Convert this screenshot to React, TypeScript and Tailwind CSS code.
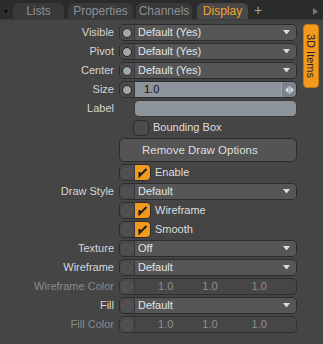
import React from "react";

const font = { fontFamily: '"Liberation Sans", Arial, sans-serif' };

function Dot({ on }: { on?: boolean }) {
  return (
    <div className="w-[15px] shrink-0 flex items-center justify-center border-r border-[#383838] bg-[#4b4b4b]">
      {on ? (
        <div className="w-[10px] h-[10px] rounded-full bg-[#a6a6a6] border border-[#222]" />
      ) : (
        <div className="w-[10px] h-[10px] rounded-full border border-[#5c5c5c] bg-[#4e4e4e]" />
      )}
    </div>
  );
}

function Arrow() {
  return (
    <svg width="7" height="5" viewBox="0 0 7 5" className="mr-[6px]">
      <path d="M0 0 L7 0 L3.5 4.5 Z" fill="#dcdcdc" />
    </svg>
  );
}

function Row({ label, dim, children }: { label?: string; dim?: boolean; children: React.ReactNode }) {
  return (
    <div className="flex h-[17px] mb-[2px]">
      <div
        className={`w-[119px] pr-[5px] text-right leading-[17px] ${dim ? "text-[#8a8a8a]" : "text-[#d6d6d6]"}`}
      >
        {label}
      </div>
      <div className="w-[178px] flex">{children}</div>
    </div>
  );
}

function Select({ value, on }: { value: string; on?: boolean }) {
  return (
    <div className="w-full flex rounded-[5px] border border-[#2c2c2c] overflow-hidden">
      <Dot on={on} />
      <div className="flex-1 flex items-center justify-between bg-[#565656] pl-[3px] text-[#e4e4e4]">
        <span className="leading-[15px]">{value}</span>
        <Arrow />
      </div>
    </div>
  );
}

function Color() {
  return (
    <div className="w-full flex rounded-[5px] border border-[#2f2f2f] overflow-hidden">
      <Dot />
      <div className="flex-1 flex items-center bg-[#464646] text-[#8e8e8e] leading-[15px]">
        <span className="ml-[23px]">1.0</span>
        <span className="ml-[29px]">1.0</span>
        <span className="ml-[34px]">1.0</span>
      </div>
    </div>
  );
}

function Check({ label }: { label: string }) {
  return (
    <div className="flex items-center">
      <div className="flex h-[17px] rounded-[5px] border border-[#2c2c2c] overflow-hidden">
        <Dot />
        <div className="w-[15px] bg-[#f39a1e] flex items-center justify-center">
          <svg width="11" height="11" viewBox="0 0 11 11">
            <path d="M2.5 5 L2.5 9 L9.5 2" fill="none" stroke="#1c1c1c" strokeWidth="2" />
          </svg>
        </div>
      </div>
      <span className="ml-[4px] text-[#dedede] leading-[17px]">{label}</span>
    </div>
  );
}

const tabs = [
  { name: "Lists", ml: "ml-[13px]", w: "w-[51px]" },
  { name: "Properties", ml: "ml-[4px]", w: "w-[65px]" },
  { name: "Channels", ml: "ml-[3px]", w: "w-[56px]" },
];

export default function App() {
  return (
    <div className="w-[323px] h-[344px] bg-[#454545] text-[11px] overflow-hidden" style={font}>
      {/* tab bar */}
      <div className="h-[20px] bg-[#2b2b2b] flex items-end relative border-b border-[#3a3a3a]">
        <div className="absolute left-[3px] top-[8px] w-[6px] h-[6px] rounded-full bg-[#111] border border-[#3a3a3a]" />
        {tabs.map((t) => (
          <div
            key={t.name}
            className={`${t.ml} ${t.w} h-[16px] rounded-t-[6px] bg-[#393939] text-[#8b9098] text-center leading-[16px] text-[12px]`}
          >
            {t.name}
          </div>
        ))}
        <div className="ml-[5px] w-[51px] h-[16px] rounded-t-[6px] bg-[#484848] text-[#f3a22e] text-center leading-[16px] text-[12px]">
          Display
        </div>
        <div className="ml-[6px] h-[16px] leading-[15px] text-[#a6a6a6] text-[14px]">+</div>
        <svg width="5" height="7" viewBox="0 0 5 7" className="absolute left-[313px] top-[8px]">
          <path d="M0 0 L5 3.5 L0 7 Z" fill="#777" />
        </svg>
      </div>

      <div className="flex pt-[4px]">
        <div className="w-[297px]">
          <Row label="Visible">
            <Select value="Default (Yes)" on />
          </Row>
          <Row label="Pivot">
            <Select value="Default (Yes)" on />
          </Row>
          <Row label="Center">
            <Select value="Default (Yes)" on />
          </Row>
          <Row label="Size">
            <div className="w-full flex rounded-[5px] border border-[#2c2c2c] overflow-hidden">
              <Dot on />
              <div className="flex-1 bg-[#8e949b] text-[#111] pl-[9px] leading-[15px]">1.0</div>
              <div className="w-[15px] bg-[#7d838a] border-l border-[#9aa0a6] flex items-center justify-center">
                <svg width="9" height="8" viewBox="0 0 9 8">
                  <path d="M3.5 0.5 L0 4 L3.5 7.5 Z" fill="#d8dbde" />
                  <path d="M5.5 0.5 L9 4 L5.5 7.5 Z" fill="#d8dbde" />
                  <path d="M4.5 0 L4.5 8" stroke="#d8dbde" strokeWidth="0.8" />
                </svg>
              </div>
            </div>
          </Row>
          <Row label="Label">
            <div className="ml-[15px] w-[163px] rounded-[5px] border border-[#3a3a3a] bg-[#8e949b]" />
          </Row>
          <Row>
            <div className="flex items-center ml-[14px]">
              <div className="w-[16px] h-[16px] rounded-[4px] border border-[#2c2c2c] bg-[#4c4c4c]" />
              <span className="ml-[4px] text-[#dedede]">Bounding Box</span>
            </div>
          </Row>
          <div className="flex h-[24px] mb-[2px]">
            <div className="w-[119px]" />
            <div className="w-[178px] rounded-[5px] border border-[#2c2c2c] bg-[#545454] text-[#dedede] pl-[22px] leading-[22px] text-[11.5px]">
              Remove Draw Options
            </div>
          </div>
          <Row>
            <Check label="Enable" />
          </Row>
          <Row label="Draw Style">
            <Select value="Default" />
          </Row>
          <Row>
            <Check label="Wireframe" />
          </Row>
          <Row>
            <Check label="Smooth" />
          </Row>
          <Row label="Texture">
            <Select value="Off" />
          </Row>
          <Row label="Wireframe">
            <Select value="Default" />
          </Row>
          <Row label="Wireframe Color" dim>
            <Color />
          </Row>
          <Row label="Fill">
            <Select value="Default" />
          </Row>
          <Row label="Fill Color" dim>
            <Color />
          </Row>
        </div>
        <div className="ml-[6px]">
          <div className="w-[16px] h-[64px] rounded-[4px] bg-[#f39a1e] border border-[#c27710] flex items-center justify-center">
            <span className="[writing-mode:vertical-rl] text-[#1e1e1e] text-[11px] leading-[14px]">3D Items</span>
          </div>
        </div>
      </div>
    </div>
  );
}
